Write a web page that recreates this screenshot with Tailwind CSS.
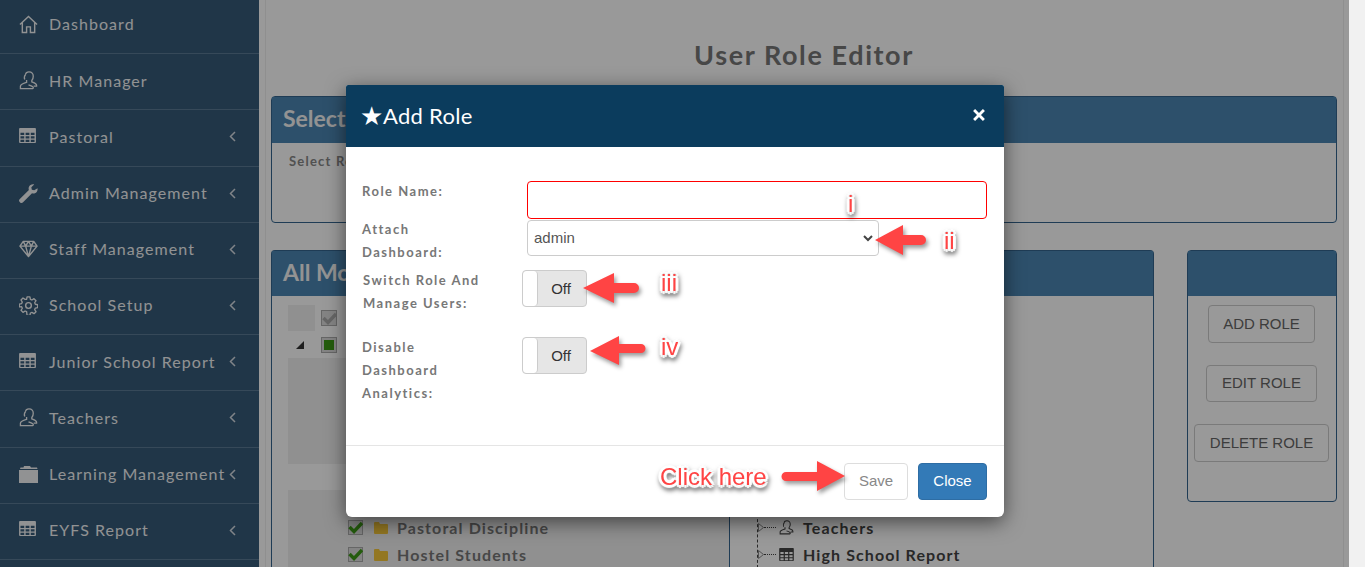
<!DOCTYPE html>
<html lang="en">

<head>
   <meta charset="UTF-8">
   <meta name="viewport" content="width=device-width, initial-scale=1.0">
   <title>User Role Editor</title>
   <script src="https://cdn.jsdelivr.net/npm/@tailwindcss/browser@4"></script>
</head>

<body class="h-[567px] overflow-hidden bg-[#f1f1f1] font-['Lato','Liberation_Sans',sans-serif]">
   <svg class="hidden">
      <symbol id="i-home" viewBox="0 0 20 20"><path d="M1 10 10 1.5 19 10M3.500 8v10.500h4.500v-6h4v6h4.500V8" fill="none" stroke="currentColor" stroke-width="1.500"/></symbol>
      <symbol id="i-user" viewBox="0 0 20 20"><path d="M7 3.500C7 2 8.500 1 10.500 1c3 0 4.500 2 4.500 4.500 0 2-.5 3.500-1.500 4.500v1.500c2 .7 5 1.500 5 3.500v1h-3M6 9c-.7-2-.3-4 1-5.500M8 9.500v2.500c-2.500.8-6.500 1.700-6.500 4v2.500h13c.7 0 .7-1.500 0-2-1-.8-3-1.500-4.500-2" fill="none" stroke="currentColor" stroke-width="1.400"/></symbol>
      <symbol id="i-table" viewBox="0 0 18 16"><path fill="currentColor" d="M1 0h16a1 1 0 0 1 1 1v14a1 1 0 0 1-1 1H1a1 1 0 0 1-1-1V1a1 1 0 0 1 1-1Zm.5 5v2.500h4V5Zm5.500 0v2.500h4V5Zm5.500 0v2.500h4V5Zm-11 3.800v2.500h4V8.800Zm5.500 0v2.500h4V8.800Zm5.500 0v2.500h4V8.800Zm-11 3.700V15h4v-2.500Zm5.500 0V15h4v-2.500Zm5.500 0V15h4v-2.500Z"/></symbol>
      <symbol id="i-wrench" viewBox="0 0 20 20"><path fill="currentColor" d="M19.500 4.500c.4 2.500-.7 4.500-2.800 5.300-1 .4-2 .3-3-.1L4 19.500c-.8.700-2 .6-2.800-.1l-.6-.6c-.8-.8-.8-2 0-2.800l9.800-9.700c-.4-1-.4-2.100 0-3.100C11.300 1 13.500 0 16 .5l-3 3 .5 2.500 2.500.5Z"/></symbol>
      <symbol id="i-gem" viewBox="0 0 20 18"><path d="M4.500 1h11L19 6l-9 11L1 6ZM1 6h18M7 6l3 11 3-11M4.500 1 7 6l3-5 3 5 2.500-5" fill="none" stroke="currentColor" stroke-width="1.500" stroke-linejoin="round"/></symbol>
      <symbol id="i-gear" viewBox="0 0 20 20"><circle cx="10" cy="10" r="3" fill="none" stroke="currentColor" stroke-width="1.500"/><path d="M8.500 1h3l.5 2.500 1.600.7 2.200-1.400 2.100 2.100-1.400 2.200.7 1.600 2.500.5v3l-2.500.5-.7 1.600 1.400 2.200-2.100 2.100-2.200-1.400-1.600.7-.5 2.500h-3L8 16.500l-1.600-.7-2.200 1.400-2.100-2.100 1.400-2.200-.7-1.600L.3 11.500v-3l2.500-.5.7-1.600-1.400-2.200 2.100-2.100 2.200 1.400L8 3.500Z" fill="none" stroke="currentColor" stroke-width="1.400" stroke-linejoin="round"/></symbol>
      <symbol id="i-folder" viewBox="0 0 19 17"><path fill="currentColor" d="M0 4h19v13H0ZM1 3l.5-1.500h3L5 0h6l1 1.500h6l.5 1.500Z"/></symbol>
      <symbol id="i-tree-folder" viewBox="0 0 14 12"><path fill="currentColor" d="M0 1a1 1 0 0 1 1-1h4l1 2h7a1 1 0 0 1 1 1v8a1 1 0 0 1-1 1H1a1 1 0 0 1-1-1Z"/></symbol>
      <symbol id="i-check" viewBox="0 0 15 13"><path d="M1.500 6 6 10.500 14 2" fill="none" stroke="currentColor" stroke-width="3.400"/></symbol>
      <symbol id="i-left" viewBox="0 0 7 11"><path d="M6 1 1.500 5.500 6 10" fill="none" stroke="currentColor" stroke-width="1.500"/></symbol>
   </svg>

   <div class="relative flex h-[567px] w-[1349px] overflow-hidden bg-white">
      <!-- sidebar -->
      <nav class="w-[259px] shrink-0 -mt-[2px] bg-[#365a78] text-[16px] tracking-[1.05px] text-[#f2f4f5]">
         <a class="flex h-[56.2px] items-center border-b border-[#5b7b95] pl-[19px] pb-[3px]"><svg class="mr-[11px] h-[19px] w-[19px]"><use href="#i-home"/></svg>Dashboard</a>
         <a class="flex h-[56.2px] items-center border-b border-[#5b7b95] pb-[2px] pl-[19px]"><svg class="mr-[11px] h-[19px] w-[19px]"><use href="#i-user"/></svg>HR Manager</a>
         <a class="flex h-[56.2px] items-center border-b border-[#5b7b95] pb-[2px] pl-[19px]"><svg class="mb-[3px] mr-[13px] h-[15px] w-[17px]"><use href="#i-table"/></svg>Pastoral<svg class="ml-auto mr-[23px] h-[11px] w-[7px] text-[#d5dde3]"><use href="#i-left"/></svg></a>
         <a class="flex h-[56.2px] items-center border-b border-[#5b7b95] pb-[2px] pl-[19px]"><svg class="mr-[11px] h-[19px] w-[19px]"><use href="#i-wrench"/></svg>Admin Management<svg class="ml-auto mr-[23px] h-[11px] w-[7px] text-[#d5dde3]"><use href="#i-left"/></svg></a>
         <a class="flex h-[56.2px] items-center border-b border-[#5b7b95] pb-[2px] pl-[19px]"><svg class="mr-[11px] h-[18px] w-[19px]"><use href="#i-gem"/></svg>Staff Management<svg class="ml-auto mr-[23px] h-[11px] w-[7px] text-[#d5dde3]"><use href="#i-left"/></svg></a>
         <a class="flex h-[56.2px] items-center border-b border-[#5b7b95] pb-[3px] pl-[19px]"><svg class="mr-[11px] h-[19px] w-[19px]"><use href="#i-gear"/></svg>School Setup<svg class="ml-auto mr-[23px] h-[11px] w-[7px] text-[#d5dde3]"><use href="#i-left"/></svg></a>
         <a class="flex h-[56.2px] items-center border-b border-[#5b7b95] pb-[2px] pl-[19px]"><svg class="mb-[3px] mr-[13px] h-[15px] w-[17px]"><use href="#i-table"/></svg>Junior School Report<svg class="ml-auto mr-[23px] h-[11px] w-[7px] text-[#d5dde3]"><use href="#i-left"/></svg></a>
         <a class="flex h-[56.2px] items-center border-b border-[#5b7b95] pb-[2px] pl-[19px]"><svg class="mr-[11px] h-[19px] w-[19px]"><use href="#i-user"/></svg>Teachers<svg class="ml-auto mr-[23px] h-[11px] w-[7px] text-[#d5dde3]"><use href="#i-left"/></svg></a>
         <a class="flex h-[56.2px] items-center border-b border-[#5b7b95] pb-[2px] pl-[19px]"><svg class="mr-[11px] h-[17px] w-[19px]"><use href="#i-folder"/></svg>Learning Management<svg class="ml-auto mr-[23px] h-[11px] w-[7px] text-[#d5dde3]"><use href="#i-left"/></svg></a>
         <a class="flex h-[56.2px] items-center border-b border-[#5b7b95] pb-[2px] pl-[19px]"><svg class="mb-[3px] mr-[13px] h-[15px] w-[17px]"><use href="#i-table"/></svg>EYFS Report<svg class="ml-auto mr-[23px] h-[11px] w-[7px] text-[#d5dde3]"><use href="#i-left"/></svg></a>
      </nav>

      <!-- page content -->
      <main class="ml-[6px] mr-[5px] flex-1 border-x border-[#eee] pl-[5px] pr-[6px]">
         <h1 class="pt-[39px] text-center text-[27px] leading-[32px] font-bold tracking-[1.6px] text-[#777]">User Role Editor</h1>

         <section class="mt-[25px] h-[127px] rounded border border-[#34658e]">
            <div class="h-[46px] bg-[#4b85b2] pl-[11px] text-[23px] leading-[42px] font-bold text-[#f5f5f5]">Select Role</div>
            <p class="pt-[9px] pl-[17px] text-[13px] font-bold tracking-[1.2px] text-[#888]">Select Role</p>
         </section>

         <div class="mt-[27px] flex items-start gap-[33px]">
            <section class="h-[340px] w-[883px] shrink-0 rounded-t border-x border-t border-[#34658e]">
               <div class="h-[45px] bg-[#4b85b2] pl-[11px] text-[23px] leading-[42px] font-bold text-[#f5f5f5]">All Modules</div>
               <div class="flex">
                  <div class="w-[458px] border-r border-[#34658e] pt-[9px] pl-[16px]">
                     <div class="flex h-[26px] items-start">
                        <div class="h-[26px] w-[27px] bg-[#f0f0f0]"></div>
                        <span class="mt-[5px] ml-[6px] flex h-[16px] w-[16px] items-center justify-center border border-[#aaa] bg-[#ddd] text-[#aaa]"><svg class="h-[13px] w-[15px] shrink-0"><use href="#i-check"/></svg></span>
                     </div>
                     <div class="flex h-[27px] items-center">
                        <svg class="ml-[8px] h-[8px] w-[8px]" viewBox="0 0 8 8"><path d="M8 0v8H0Z" fill="#333"/></svg>
                        <span class="ml-[17px] flex h-[16px] w-[16px] items-center justify-center border border-[#aaa] bg-[#ddd]"><span class="h-[10px] w-[10px] bg-[#3c9a16]"></span></span>
                     </div>
                     <div class="h-[106px] bg-[#f0f0f0]"></div>
                     <div class="mt-[26px] h-[90px] bg-[#f0f0f0] pt-[24px] pl-[60px] text-[16px] font-bold tracking-[1.1px] text-[#777]">
                        <div class="flex h-[27px] items-center"><span class="flex h-[15px] w-[15px] items-center justify-center border border-[#aaa] bg-[#ddd] text-[#3c9a16]"><svg class="h-[13px] w-[15px] shrink-0"><use href="#i-check"/></svg></span><svg class="ml-[11px] mr-[9px] h-[12px] w-[14px] text-[#f5c63a]"><use href="#i-tree-folder"/></svg>Pastoral Discipline</div>
                        <div class="flex h-[27px] items-center"><span class="flex h-[15px] w-[15px] items-center justify-center border border-[#aaa] bg-[#ddd] text-[#3c9a16]"><svg class="h-[13px] w-[15px] shrink-0"><use href="#i-check"/></svg></span><svg class="ml-[11px] mr-[9px] h-[12px] w-[14px] text-[#f5c63a]"><use href="#i-tree-folder"/></svg>Hostel Students</div>
                     </div>
                  </div>
                  <div class="flex-1 pt-[218px] pl-[27px]">
                     <div class="border-l border-dashed border-[#444] text-[16px] font-bold tracking-[1.1px] text-[#444]">
                        <div class="flex h-[27px] items-center"><svg class="h-[9px] w-[6px]" viewBox="0 0 6 9"><path d="M.5.500 5.500 4.500.5 8.500Z" fill="none" stroke="#888"/></svg><span class="w-[12px] border-t border-dotted border-[#444]"></span><svg class="ml-[3px] mr-[9px] h-[15px] w-[15px]"><use href="#i-user"/></svg>Teachers</div>
                        <div class="flex h-[27px] items-center"><svg class="h-[9px] w-[6px]" viewBox="0 0 6 9"><path d="M.5.500 5.500 4.500.5 8.500Z" fill="none" stroke="#888"/></svg><span class="w-[12px] border-t border-dotted border-[#444]"></span><svg class="ml-[3px] mr-[9px] h-[13px] w-[15px]"><use href="#i-table"/></svg>High School Report</div>
                     </div>
                  </div>
               </div>
            </section>

            <section class="h-[252px] flex-1 rounded border border-[#34658e]">
               <div class="h-[45px] bg-[#4b85b2]"></div>
               <div class="flex flex-col items-center pt-[9px] pr-[1px] font-['Liberation_Sans',sans-serif] text-[15px] text-[#666]">
                  <button class="h-[38px] w-[107px] rounded border border-[#ccc]">ADD ROLE</button>
                  <button class="mt-[22px] h-[37px] w-[111px] rounded border border-[#ccc]">EDIT ROLE</button>
                  <button class="mt-[22px] h-[38px] w-[135px] rounded border border-[#ccc]">DELETE ROLE</button>
               </div>
            </section>
         </div>
      </main>
   </div>

   <!-- backdrop -->
   <div class="absolute top-0 left-0 h-[567px] w-[1349px] bg-black/40"></div>

   <!-- Add Role dialog -->
   <div class="absolute top-[85px] left-[346px] h-[432px] w-[658px] overflow-hidden rounded-b-md rounded-t-[2px] bg-white shadow-[0_5px_20px_rgba(0,0,0,0.55)]">
      <div class="flex h-[62px] items-center bg-[#0b3c5d] pr-[19px] pb-[2px] pl-[14px] text-white">
         <span class="text-[26px] leading-none">★</span>
         <span class="text-[22px] tracking-[0.3px]">Add Role</span>
         <svg class="ml-auto h-[12px] w-[12px]" viewBox="0 0 11 11"><path d="M1 1l9 9M10 1l-9 9" stroke="currentColor" stroke-width="2.600"/></svg>
      </div>

      <div class="h-[299px] border-b border-[#e5e5e5] pt-[34px] text-[13px] leading-[23px] font-bold tracking-[1.5px] text-[#777]">
         <div class="flex h-[39px]">
            <label class="-mt-[1px] w-[181px] pl-[16px]">Role Name:</label>
            <input class="h-[38px] w-[460px] rounded border border-[#f00] outline-none">
         </div>
         <div class="flex h-[50px]">
            <label class="-mt-[2px] w-[181px] pl-[16px]">Attach<br>Dashboard:</label>
            <div class="relative h-[36px] w-[352px] rounded border border-[#ccc] pl-[6px] font-['Liberation_Sans',sans-serif] text-[15px] leading-[34px] font-normal tracking-normal text-[#555]">admin
               <svg class="absolute top-[14px] right-[5px] h-[7px] w-[10px]" viewBox="0 0 10 7"><path d="M1 1l4 4 4-4" fill="none" stroke="#444" stroke-width="2"/></svg>
            </div>
         </div>
         <div class="flex h-[67px]">
            <label class="-mt-[1px] w-[176px] pl-[17px]">Switch Role And<br>Manage Users:</label>
            <div class="flex h-[37px] w-[65px] overflow-hidden rounded border border-[#ccc] bg-[#e6e6e6] font-['Liberation_Sans',sans-serif] text-[15px] font-normal tracking-normal text-[#333]">
               <span class="w-[15px] rounded-sm border-r border-[#ccc] bg-white"></span><span class="flex-1 pr-[2px] text-center leading-[35px]">Off</span>
            </div>
         </div>
         <div class="flex">
            <label class="-mt-[1px] w-[176px] pr-[30px] pl-[16px]">Disable Dashboard Analytics:</label>
            <div class="flex h-[37px] w-[65px] overflow-hidden rounded border border-[#ccc] bg-[#e6e6e6] font-['Liberation_Sans',sans-serif] text-[15px] font-normal tracking-normal text-[#333]">
               <span class="w-[15px] rounded-sm border-r border-[#ccc] bg-white"></span><span class="flex-1 pr-[2px] text-center leading-[35px]">Off</span>
            </div>
         </div>
      </div>

      <div class="flex justify-end gap-[10px] pt-[17px] pr-[17px] font-['Liberation_Sans',sans-serif] text-[15px]">
         <button class="h-[37px] w-[64px] rounded border border-[#ddd] text-[#888]">Save</button>
         <button class="h-[37px] w-[69px] rounded border border-[#2e6da4] bg-[#337ab7] text-white">Close</button>
      </div>
   </div>

   <!-- red annotations drawn on the screenshot -->
   <svg class="absolute top-0 left-0 h-[567px] w-[1365px] drop-shadow-[2px_3px_2px_rgba(0,0,0,0.4)]" viewBox="0 0 1365 567">
      <g fill="#ff4444">
         <path d="M875 240 903 225V235H921a5 5 0 0 1 0 10H903V255Z"/>
         <path d="M583 288 614 273V283H634a5 5 0 0 1 0 10H614V303Z"/>
         <path d="M590 351 619 336V344H641a4.500 4.500 0 0 1 0 9H619V365Z"/>
         <path d="M845 476 817 461V472H786a4.500 4.500 0 0 0 0 9H817V491Z"/>
      </g>
   </svg>
   <span class="absolute top-[190px] left-[848px] font-['Liberation_Sans',sans-serif] text-[24px] leading-[28px] text-[#ff4444] drop-shadow-[1px_3px_2px_rgba(0,0,0,0.5)] [text-shadow:-3px_0_1px_#fff,3px_0_1px_#fff,0_-3px_1px_#fff,0_3px_1px_#fff,-2px_-2px_1px_#fff,2px_2px_1px_#fff,2px_-2px_1px_#fff,-2px_2px_1px_#fff]">i</span>
   <span class="absolute top-[227px] left-[944px] font-['Liberation_Sans',sans-serif] text-[24px] leading-[28px] text-[#ff4444] drop-shadow-[1px_3px_2px_rgba(0,0,0,0.5)] [text-shadow:-3px_0_1px_#fff,3px_0_1px_#fff,0_-3px_1px_#fff,0_3px_1px_#fff,-2px_-2px_1px_#fff,2px_2px_1px_#fff,2px_-2px_1px_#fff,-2px_2px_1px_#fff]">ii</span>
   <span class="absolute top-[269px] left-[661px] font-['Liberation_Sans',sans-serif] text-[24px] leading-[28px] text-[#ff4444] drop-shadow-[1px_3px_2px_rgba(0,0,0,0.5)] [text-shadow:-3px_0_1px_#fff,3px_0_1px_#fff,0_-3px_1px_#fff,0_3px_1px_#fff,-2px_-2px_1px_#fff,2px_2px_1px_#fff,2px_-2px_1px_#fff,-2px_2px_1px_#fff]">iii</span>
   <span class="absolute top-[333px] left-[661px] font-['Liberation_Sans',sans-serif] text-[24px] leading-[28px] text-[#ff4444] drop-shadow-[1px_3px_2px_rgba(0,0,0,0.5)] [text-shadow:-3px_0_1px_#fff,3px_0_1px_#fff,0_-3px_1px_#fff,0_3px_1px_#fff,-2px_-2px_1px_#fff,2px_2px_1px_#fff,2px_-2px_1px_#fff,-2px_2px_1px_#fff]">iv</span>
   <span class="absolute top-[463px] left-[660px] font-['Liberation_Sans',sans-serif] text-[24px] leading-[28px] whitespace-nowrap text-[#ff4444] drop-shadow-[1px_3px_2px_rgba(0,0,0,0.5)] [text-shadow:-3px_0_1px_#fff,3px_0_1px_#fff,0_-3px_1px_#fff,0_3px_1px_#fff,-2px_-2px_1px_#fff,2px_2px_1px_#fff,2px_-2px_1px_#fff,-2px_2px_1px_#fff]">Click here</span>
</body>

</html>
